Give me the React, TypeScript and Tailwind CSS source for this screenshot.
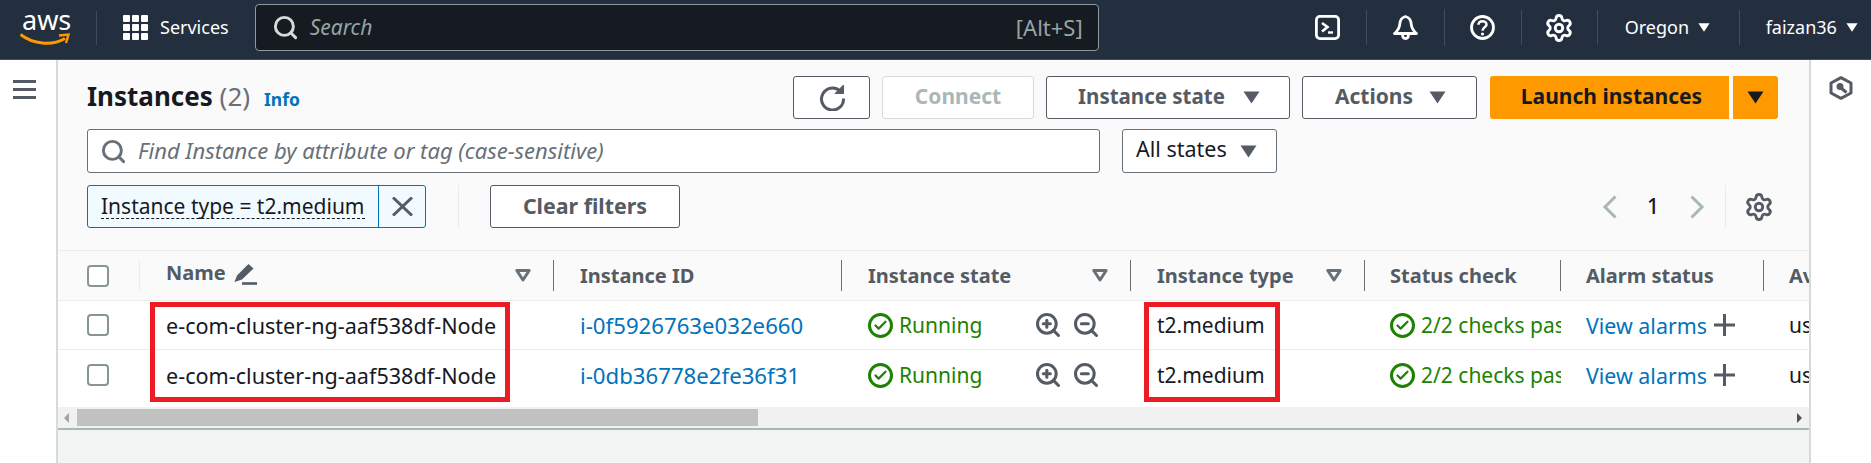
import React from "react";
import { Search, Settings, ZoomIn, ZoomOut, Check } from "lucide-react";

const Caret = ({ w = 17, h = 13, color = "#545b64" }: { w?: number; h?: number; color?: string }) => (
  <svg width={w} height={h} viewBox="0 0 16 13" preserveAspectRatio="none" className="shrink-0"><path d="M0.5 0.5H15.5L8 12.5Z" fill={color} /></svg>
);

const SortIcon = () => (
  <svg width="16" height="13" viewBox="0 0 16 13" className="shrink-0">
    <path d="M1.8 1.5H14.2L8 11Z" fill="none" stroke="#687078" strokeWidth="3" strokeLinejoin="round" />
  </svg>
);

const PlusIcon = () => (
  <svg width="21" height="22" viewBox="0 0 21 22" className="ml-[7px] shrink-0" stroke="#545b64" strokeWidth="3" fill="none">
    <path d="M0 11H21M10.5 0V22" />
  </svg>
);

const Chev = ({ d, className = "" }: { d: string; className?: string }) => (
  <svg width="16" height="24" viewBox="0 0 16 24" fill="none" stroke="#aab7b8" strokeWidth="3" className={className}>
    <path d={d} />
  </svg>
);

const Btn = ({ w, children, className = "" }: { w: string; children: React.ReactNode; className?: string }) => (
  <div className={`flex h-[43px] items-center justify-center rounded-[3px] border border-[#545b64] bg-white font-bold text-[#545b64] ${w} ${className}`}>
    {children}
  </div>
);

const Vr = ({ className = "" }: { className?: string }) => <div className={`w-px shrink-0 ${className}`} />;

const OkIcon = () => (
  <span className="flex h-[25px] w-[25px] shrink-0 items-center justify-center rounded-full border-[3px] border-[#1d8102]">
    <Check size={15} strokeWidth={3.5} color="#1d8102" />
  </span>
);

const Head = ({ w, label, sort, pl = "pl-[26px]" }: { w: string; label: string; sort?: boolean; pl?: string }) => (
  <div className={`flex h-[31px] shrink-0 items-center justify-between border-r border-[#687078] pr-[22px] ${pl} ${w}`}>
    <span className="whitespace-nowrap">{label}</span>
    {sort && <SortIcon />}
  </div>
);

const Box = () => <span className="h-[22px] w-[22px] rounded-[4px] border-2 border-[#879596] bg-white" />;

const Row = ({ id, h, border }: { id: string; h: string; border?: boolean }) => (
  <div className={`flex items-center bg-white text-[21px] text-[#16191f] ${h} ${border ? "border-b border-[#eaeded]" : ""}`}>
    <div className="flex w-[82px] shrink-0 justify-center pr-[2px]">
      <Box />
    </div>
    <div className="w-[414px] shrink-0 whitespace-nowrap pl-[26px] pt-[2px] text-[21.6px]">e-com-cluster-ng-aaf538df-Node</div>
    <div className="w-[288px] shrink-0 whitespace-nowrap pl-[26px] pt-[2px] text-[22.2px] text-[#0073bb]">{id}</div>
    <div className="flex w-[289px] shrink-0 items-center pl-[26px]">
      <OkIcon />
      <span className="ml-[6px] pt-[2px] text-[#1d8102]">Running</span>
      <ZoomIn size={28} strokeWidth={2.6} color="#545b64" className="ml-[52px]" />
      <ZoomOut size={28} strokeWidth={2.6} color="#545b64" className="ml-[10px]" />
    </div>
    <div className="w-[234px] shrink-0 pl-[26px] pt-[2px]">t2.medium</div>
    <div className="flex w-[196px] shrink-0 items-center overflow-hidden pl-[25px]">
      <OkIcon />
      <span className="ml-[6px] whitespace-nowrap pt-[2px] text-[#1d8102]">2/2 checks passed</span>
    </div>
    <div className="flex w-[203px] shrink-0 items-center whitespace-nowrap pl-[25px] text-[21.4px] text-[#0073bb]">
      <span className="pt-[2px]">View alarms</span>
      <PlusIcon />
    </div>
    <div className="min-w-0 flex-1 overflow-hidden whitespace-nowrap pl-[25px] pt-[2px]">us-west-2a</div>
  </div>
);

export default function App() {
  return (
    <div className="flex h-[463px] w-[1871px] flex-col overflow-hidden bg-white font-['Noto_Sans',sans-serif]">
      {/* top navigation */}
      <header className="flex h-[60px] shrink-0 items-center border-b border-[#414d5c] bg-[#232f3e] pb-[4px] text-white">
        <div className="relative ml-[20px] mt-[3px] h-[34px] w-[50px] shrink-0">
          <span className="absolute left-[2px] top-[-12px] text-[27px] leading-[40px] text-white">aws</span>
          <svg className="absolute left-0 top-[21px]" width="50" height="14" viewBox="0 0 50 14" fill="none">
            <path d="M0.5 1.5C13 11.5 32 13 45 5.5" stroke="#f90" strokeWidth="3" />
            <path d="M39 2.5L48.5 1.5L46 10" stroke="#f90" strokeWidth="2.4" />
          </svg>
        </div>
        <Vr className="ml-[26px] h-[34px] bg-[#3e4b5a]" />
        <div className="ml-[26px] grid w-[25px] shrink-0 grid-cols-3 gap-[2px]">
          {Array.from({ length: 9 }).map((_, i) => (
            <span key={i} className="h-[7px] w-[7px] rounded-[1px] bg-white" />
          ))}
        </div>
        <span className="ml-[12px] text-[18px] text-white">Services</span>
        <div className="ml-[26px] flex h-[47px] w-[844px] shrink-0 items-center rounded-[4px] border border-[#8d9ba1] bg-[#161b22] pl-[16px] pr-[15px]">
          <Search size={27} strokeWidth={2.6} color="#d5dbdb" />
          <span className="ml-[11px] flex-1 text-[21px] italic text-[#95a5a6]">Search</span>
          <span className="text-[22px] text-[#95a5a6]">[Alt+S]</span>
        </div>
        {/* right hand utilities */}
        <div className="ml-[216px] flex h-[34px] w-[25px] shrink-0 items-center justify-center">
          <svg width="25" height="25" viewBox="0 0 25 25" fill="none" stroke="white" strokeWidth="2.8">
            <rect x="1.4" y="1.4" width="22.2" height="22.2" rx="3.5" />
            <path d="M7 8L12.5 12L7 16.5" strokeWidth="2.6" />
            <path d="M13 17.5H18" strokeWidth="2.4" />
          </svg>
        </div>
        <Vr className="ml-[26px] h-[35px] bg-[#414d5c]" />
        <div className="flex w-[77px] shrink-0 justify-center">
          <svg width="25" height="25" viewBox="0 0 25 25" fill="none" stroke="white" strokeWidth="2.8" strokeLinejoin="round">
            <path d="M12.5 1.5C8.5 2.5 7 6 6.8 9C6.5 13 5 15.5 1.5 18.5H23.5C20 15.5 18.5 13 18.2 9C18 6 16.5 2.5 12.5 1.5Z" />
            <path d="M9.5 19C9.5 25 15.5 25 15.5 19" />
          </svg>
        </div>
        <Vr className="h-[37px] bg-[#414d5c]" />
        <div className="flex w-[76px] shrink-0 justify-center">
          <svg width="25" height="25" viewBox="0 0 25 25" fill="none" stroke="white" strokeWidth="2.8">
            <circle cx="12.5" cy="12.5" r="11" />
            <path d="M8.5 9.8C8.5 5 16.5 5 16.5 9.6C16.5 12.5 12.5 12.3 12.5 15.8" strokeWidth="2.5" />
            <circle cx="12.5" cy="19" r="1.6" fill="white" stroke="none" />
          </svg>
        </div>
        <Vr className="h-[35px] bg-[#414d5c]" />
        <div className="flex w-[75px] shrink-0 justify-center">
          <Settings size={30} strokeWidth={2.3} color="white" />
        </div>
        <Vr className="h-[35px] bg-[#414d5c]" />
        <div className="flex w-[141px] shrink-0 items-center pl-[27px]">
          <span className="text-[18px]">Oregon</span>
          <span className="ml-[9px]"><Caret w={12} h={9} color="white" /></span>
        </div>
        <Vr className="h-[35px] bg-[#414d5c]" />
        <div className="flex flex-1 items-center pl-[26px]">
          <span className="text-[18px]">faizan36</span>
          <span className="ml-[9px]"><Caret w={12} h={9} color="white" /></span>
        </div>
      </header>

      <div className="flex min-h-0 flex-1">
        {/* side rail */}
        <aside className="flex w-[56px] shrink-0 flex-col items-center pr-[7px] pt-[20px]">
          <div className="flex w-[23px] flex-col gap-[5px]">
            <span className="h-[3px] bg-[#545b64]" />
            <span className="h-[3px] bg-[#545b64]" />
            <span className="h-[3px] bg-[#545b64]" />
          </div>
        </aside>

        {/* content */}
        <main className="flex w-[1755px] shrink-0 flex-col border-x-2 border-[#d5dbdb] bg-[#f2f3f3]">
          <section className="flex h-[190px] shrink-0 flex-col bg-[#fafafa] pl-[29px] pr-[31px] pt-[16px]">
            <div className="flex h-[43px] items-center">
              <h1 className="mb-[4px] text-[26px] font-bold leading-none text-[#16191f]">
                Instances <span className="font-normal text-[#687078]">(2)</span>
              </h1>
              <span className="ml-[14px] mt-[3px] text-[17.5px] font-bold text-[#0073bb]">Info</span>
              <Btn w="w-[77px]" className="ml-auto">
                <svg width="28" height="27" viewBox="0 0 28 27" fill="none" stroke="#545b64" strokeWidth="3">
                  <path d="M22 7A11 11 0 1 0 25.5 14.5" />
                  <path d="M25.5 1V9.5H17Z" fill="#545b64" strokeWidth="1" />
                </svg>
              </Btn>
              <div className="ml-[12px] flex h-[43px] w-[152px] items-center justify-center rounded-[3px] border border-[#d5dbdb] bg-white pb-[2px] text-[21px] font-bold text-[#aab7b8]">Connect</div>
              <Btn w="w-[244px]" className="ml-[12px] gap-[18px] pl-[2px]"><span className="mb-[2px] text-[20.5px]">Instance state</span> <Caret /></Btn>
              <Btn w="w-[175px]" className="ml-[12px] gap-[16px] pl-[2px]"><span className="mb-[2px] text-[21px]">Actions</span> <Caret /></Btn>
              <div className="ml-[13px] flex h-[43px] w-[239px] items-center justify-center rounded-l-[3px] bg-[#ff9900] pb-[2px] pl-[4px] text-[21px] font-bold text-[#16191f]">Launch instances</div>
              <div className="ml-[4px] flex h-[43px] w-[45px] items-center justify-center rounded-r-[3px] bg-[#ff9900]"><Caret color="#16191f" /></div>
            </div>
            <div className="mt-[10px] flex h-[44px] items-center">
              <div className="flex h-[44px] w-[1013px] items-center rounded-[3px] border border-[#687078] bg-white pl-[12px]">
                <Search size={27} strokeWidth={2.6} color="#687078" />
                <span className="mb-[2px] ml-[11px] text-[22px] italic text-[#687078]">Find Instance by attribute or tag (case-sensitive)</span>
              </div>
              <div className="ml-[22px] flex h-[44px] w-[155px] items-center justify-between rounded-[3px] border border-[#687078] bg-white pl-[13px] pr-[19px] text-[#16191f]">
                <span className="mb-[3px] text-[21.5px]">All states</span> <Caret />
              </div>
            </div>
            <div className="mt-[12px] flex items-center">
              <div className="flex h-[43px] w-[339px] rounded-[3px] border border-[#0073bb] bg-[#f1faff]">
                <div className="flex w-[290px] items-center pl-[13px] text-[21px] text-[#16191f]">
                  <span className="whitespace-nowrap border-b border-dashed border-[#16191f] leading-[24px]">Instance type = t2.medium</span>
                </div>
                <div className="flex flex-1 items-center justify-center border-l border-[#0073bb]">
                  <svg width="21" height="19" viewBox="0 0 21 19" stroke="#545b64" strokeWidth="3" fill="none">
                    <path d="M1 0.5L20 18.5M20 0.5L1 18.5" />
                  </svg>
                </div>
              </div>
              <div className="ml-[32px] h-[43px] w-px bg-[#eaeded]" />
              <Btn w="w-[190px]" className="ml-[31px]"><span className="text-[21.4px]">Clear filters</span></Btn>
              <div className="ml-auto flex h-[43px] items-center pr-[4px]">
                <Chev d="M13.5 1.5L3 12L13.5 22.5" />
                <span className="ml-[25px] w-[20px] text-center text-[21px] font-medium text-[#16191f]">1</span>
                <Chev d="M2.5 1.5L13 12L2.5 22.5" className="ml-[26px]" />
                <div className="ml-[20px] h-[43px] w-px bg-[#eaeded]" />
                <Settings size={30} strokeWidth={2.3} color="#545b64" className="ml-[18px]" />
              </div>
            </div>
          </section>

          {/* table */}
          <div className="relative">
            <div className="flex h-[51px] items-center border-y border-[#eaeded] bg-[#fafafa] text-[20px] font-bold text-[#545b64]">
              <div className="flex h-[31px] w-[82px] shrink-0 items-center justify-center border-r border-[#eaeded] pr-[2px]">
                <Box />
              </div>
              <div className="flex h-[31px] w-[414px] shrink-0 items-center justify-between border-r border-[#687078] pl-[26px] pr-[22px]">
                <span className="mt-[-5px] flex items-center gap-[8px]">
                  Name
                  <svg width="23" height="23" viewBox="0 0 23 23" fill="none">
                    <path d="M0.5 20L3 13.5L14.5 2L19.5 6.5L8 17.5Z" fill="#545b64" />
                    <path d="M8 21.5H23" stroke="#545b64" strokeWidth="2.6" />
                  </svg>
                </span>
                <SortIcon />
              </div>
              <Head w="w-[288px]" label="Instance ID" />
              <Head w="w-[289px]" label="Instance state" sort />
              <Head w="w-[234px]" label="Instance type" sort />
              <Head w="w-[196px]" label="Status check" pl="pl-[25px]" />
              <Head w="w-[203px]" label="Alarm status" pl="pl-[25px]" />
              <div className="min-w-0 flex-1 overflow-hidden whitespace-nowrap pl-[25px]">Availability Zone</div>
            </div>
            <Row id="i-0f5926763e032e660" h="h-[49px]" border />
            <Row id="i-0db36778e2fe36f31" h="h-[57px] pb-[7px]" />
            {/* horizontal scrollbar */}
            <div className="flex h-[23px] items-center border-b-2 border-[#aab7b8] bg-[#f1f1f1]">
              <svg width="19" height="10" viewBox="0 0 19 10" className="shrink-0"><path d="M11 0V10L6 5Z" fill="#a3a3a3" /></svg>
              <div className="h-[17px] w-[681px] bg-[#c1c1c1]" />
              <div className="flex-1" />
              <svg width="12" height="10" viewBox="0 0 12 10" className="shrink-0"><path d="M0 0V10L5 5Z" fill="#505050" /></svg>
            </div>
            {/* red annotation boxes */}
            <div className="pointer-events-none absolute left-[92px] top-[52px] h-[100px] w-[360px] border-[5px] border-[#ed1c24]" />
            <div className="pointer-events-none absolute left-[1086px] top-[52px] h-[100px] w-[136px] border-[5px] border-[#ed1c24]" />
          </div>
        </main>

        {/* right rail */}
        <aside className="flex flex-1 justify-center bg-white pt-[16px]">
          <svg width="24" height="24" viewBox="0 0 24 24" fill="none" className="mr-[1px]">
            <path d="M12 1.7L22 7V17L12 22.3L2 17V7Z" stroke="#545b64" strokeWidth="3" strokeLinejoin="round" />
            <circle cx="11" cy="10.5" r="3.5" fill="#545b64" />
            <path d="M12 12L17.5 16.5" stroke="#545b64" strokeWidth="3" />
          </svg>
        </aside>
      </div>
    </div>
  );
}
